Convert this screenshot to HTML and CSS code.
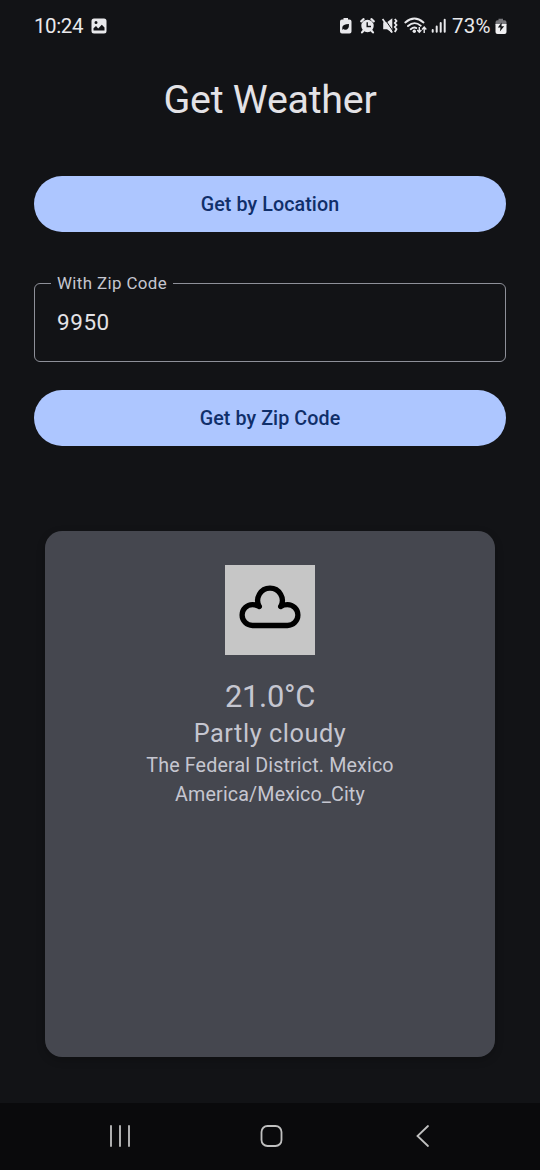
FILE: index.html
```
<!DOCTYPE html>
<html lang="en">
<head>
<meta charset="utf-8">
<title>Get Weather</title>
<link rel="stylesheet" href="styles.css">
</head>
<body>
<div class="screen">
  <header class="status">
    <span class="clock">10:24</span>
    <svg class="photo" width="16" height="16" viewBox="0 0 16 16"><path fill="#e9e9ec" fill-rule="evenodd" d="M3 0.5H13Q15.5 .5 15.5 3V13Q15.5 15.5 13 15.5H3Q.5 15.5 .5 13V3Q.5 .5 3 .5ZM2.5 10.3V12.6H13.5V9.5L10.8 6.8L7.2 10.4L5 8.1ZM5 3.1A1.5 1.5 0 1 0 5 6.1A1.5 1.5 0 1 0 5 3.1Z"/></svg>
    <svg class="indicators" width="108" height="24" viewBox="339 14 108 24" fill="none" stroke="#e9e9ec">
      <path fill="#e9e9ec" stroke="none" d="M343.5 18H348V19.6H349.5Q351.5 19.6 351.5 21.6V31.5Q351.5 33.5 349.5 33.5H342Q340 33.5 340 31.5V21.6Q340 19.6 342 19.6H343.5Z"/>
      <path fill="#121316" stroke="none" d="M349 24Q349.2 29.8 345.2 29.8Q343.9 29.8 343.3 29L342.3 30V27.5Q342.5 24.4 349 24Z"/>
      <circle cx="367.5" cy="26" r="6.2" fill="#e9e9ec" stroke="none"/>
      <path stroke-width="2.2" stroke-linecap="round" d="M361.2 21.3L363.6 19.2M373.8 21.3L371.4 19.2M363.2 31L362 32.4M371.8 31L373 32.4"/>
      <path stroke="#121316" stroke-width="1.4" d="M367.2 22.3V26.5H371"/>
      <path fill="#e9e9ec" stroke="none" d="M383.2 22.2H387L392.3 18.3V33L387 29.2H383.2Z"/>
      <path stroke="#121316" stroke-width="1" d="M384.1 18L393.3 31.5"/>
      <path stroke-width="1.7" d="M382.6 19L392 32.6"/>
      <path stroke-width="1.8" d="M394.8 19L396.5 21L394.8 23L396.5 25L394.8 27L396.5 29L394.8 32"/>
      <path stroke-width="1.9" stroke-linecap="round" d="M405.3 22.4Q414.4 14.7 423.5 22.4M408 26Q414.4 20.4 420.7 25.7M410.7 29.2Q414 26.5 416.2 28.1"/>
      <circle cx="414.3" cy="31.3" r="1.7" fill="#e9e9ec" stroke="none"/>
      <path stroke-width="1.4" d="M419.3 27V31.8M417.2 30L419.3 32.3L421.4 30M424.2 33V27.5M422.1 29.5L424.2 27L426.3 29.5"/>
      <path stroke-width="2" stroke-linecap="round" d="M432.7 30V31.8M436.7 26.5V31.8M440.7 23V31.8M444.7 19.7V31.8"/>
    </svg>
    <span class="percent">73%</span>
    <svg class="battery" width="12" height="17" viewBox="0 0 12 17"><path fill="#77777b" d="M3.5 .7H8V2.3H9.5Q11.5 2.3 11.5 4.3V7H.5V4.3Q.5 2.3 2.5 2.3H3.5Z"/><path fill="#f0f0f2" d="M.5 6H11.5V14Q11.5 16 9.5 16H2.5Q.5 16 .5 14Z"/><path fill="#121316" d="M6.7 4.5L2.8 9.4H5.5L4.9 13.5L9.2 8.3H6.5Z"/></svg>
  </header>
  <main class="content">
    <h1 class="title">Get Weather</h1>
    <button class="button">Get by Location</button>
    <fieldset class="field"><legend class="label">With Zip Code</legend><span class="value">9950</span></fieldset>
    <button class="button">Get by Zip Code</button>
    <section class="card">
      <svg class="cloud" width="90" height="90" viewBox="0 0 90 90"><path d="M34.3 41.5A12.3 12.3 0 1 1 55.7 41.5M34.3 41.5C31.8 39.8 30.2 39.7 27.5 39.7A10.4 10.4 0 0 0 27.5 60.5H62.5A10.4 10.4 0 0 0 62.5 39.7C59.8 39.7 58.2 39.8 55.7 41.5"/></svg>
      <p class="temperature">21.0°C</p>
      <p class="condition">Partly cloudy</p>
      <p class="place">The Federal District. Mexico</p>
      <p class="place">America/Mexico_City</p>
    </section>
  </main>
  <nav class="nav">
    <svg width="24" height="24" viewBox="0 0 24 24"><path d="M3 2V22M12 2V22M21 2V22"/></svg>
    <svg width="24" height="24" viewBox="0 0 24 24"><rect x="1.5" y="2" width="20" height="20" rx="6"/></svg>
    <svg width="24" height="24" viewBox="0 0 24 24"><path d="M17 2L6.5 12L17 22"/></svg>
  </nav>
</div>
</body>
</html>
```
FILE: styles.css
```
* { box-sizing: border-box; }
body { margin: 0; background: #121316; font-family: Roboto, sans-serif; color: #e3e2e6; }
.screen { width: 540px; height: 1170px; display: flex; flex-direction: column; overflow: hidden; }
.status { height: 52px; flex: none; display: flex; align-items: center; padding: 0 33px 0 34px; color: #e9e9ec; font-size: 20.5px; }
.clock { width: 49px; letter-spacing: -.4px; white-space: nowrap; }
.photo { margin-left: 8px; }
.indicators { margin-left: auto; }
.percent { width: 41px; margin-left: 5px; letter-spacing: .2px; white-space: nowrap; }
.battery { margin-left: 2px; }
.content { flex: 1; padding: 0 34px; display: flex; flex-direction: column; }
.title { margin: 22px 0 51px; font-size: 39.4px; font-weight: 400; line-height: 51px; letter-spacing: -.25px; text-align: center; }
.button { flex: none; height: 56.3px; padding: 1px 0 0; border: 0; border-radius: 28px; background: #adc6ff; color: #102f6a; font: 500 19.69px/28px Roboto, sans-serif; letter-spacing: .08px; }
.field { flex: none; height: 89px; margin: 40.7px 0 28px; padding: 0 16px; border: 1.4px solid #8e9099; border-radius: 6px; }
.label { padding: 0 6px; color: #c5c6d0; font-size: 16.9px; line-height: 21px; letter-spacing: .38px; }
.value { display: block; margin: 15px 0 0 6px; font-size: 22.5px; line-height: 26px; letter-spacing: .55px; }
.card { height: 526px; margin: 84.7px 11px 0; padding-top: 34px; border-radius: 17px; background: #45474f; color: #c5c6d0; display: flex; flex-direction: column; align-items: center; box-shadow: 0 3px 8px rgba(0,0,0,.22); }
.card p { margin: 0; white-space: nowrap; }
.cloud { background: #c6c6c6; fill: none; stroke: #000; stroke-width: 5.3; stroke-linejoin: round; stroke-linecap: round; }
.card .temperature { margin-top: 22px; font-size: 30.9px; line-height: 40px; letter-spacing: -.3px; }
.condition { font-size: 25.3px; line-height: 34.5px; letter-spacing: .55px; }
.place { font-size: 19.69px; line-height: 29px; letter-spacing: .14px; }
.nav { flex: none; height: 67px; padding: 0 105px 2px 108px; background: #0a0a0c; display: flex; justify-content: space-between; align-items: center; }
.nav svg { fill: none; stroke: #c0c0c0; stroke-width: 1.8; stroke-linecap: round; }
```
